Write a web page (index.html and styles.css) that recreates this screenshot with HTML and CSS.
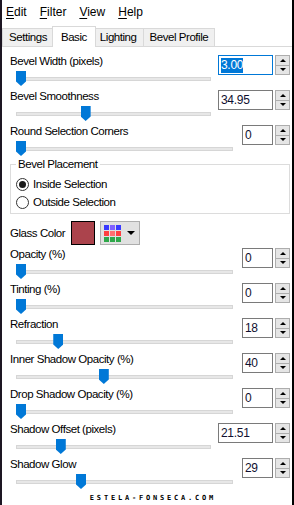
FILE: index.html
```html
<!DOCTYPE html>
<html>
<head>
    <meta charset="UTF-8">
    <title>Inner Bevel</title>
    <link rel="stylesheet" href="styles.css">
</head>
<body>
<div class="window">
    <div class="menubar">
        <span class="menu"><u>E</u>dit</span>
        <span class="menu"><u>F</u>ilter</span>
        <span class="menu"><u>V</u>iew</span>
        <span class="menu"><u>H</u>elp</span>
    </div>
    <div class="tabs">
        <div class="tab">Settings</div>
        <div class="tab active">Basic</div>
        <div class="tab">Lighting</div>
        <div class="tab">Bevel Profile</div>
    </div>
    <div class="panel">
        <div class="row wide">
            <div class="label">Bevel Width (pixels)</div>
            <div class="slider"><div class="track"></div><div class="thumb" style="--v:0"></div></div>
            <div class="spin focus"><div class="field"><span class="sel">3.00</span></div><div class="arrows"><div class="up"></div><div class="down"></div></div></div>
        </div>
        <div class="row wide">
            <div class="label">Bevel Smoothness</div>
            <div class="slider"><div class="track"></div><div class="thumb" style="--v:0.3495"></div></div>
            <div class="spin"><div class="field">34.95</div><div class="arrows"><div class="up"></div><div class="down"></div></div></div>
        </div>
        <div class="row">
            <div class="label">Round Selection Corners</div>
            <div class="slider"><div class="track"></div><div class="thumb" style="--v:0"></div></div>
            <div class="spin"><div class="field">0</div><div class="arrows"><div class="up"></div><div class="down"></div></div></div>
        </div>

        <fieldset class="group">
            <legend>Bevel Placement</legend>
            <label class="radio"><span class="dot checked"></span>Inside Selection</label>
            <label class="radio"><span class="dot"></span>Outside Selection</label>
        </fieldset>

        <div class="colorrow">
            <span class="label">Glass Color</span>
            <span class="swatch"></span>
            <span class="pick">
                <span class="grid">
                    <i class="b1"></i><i class="b2"></i><i class="b1"></i>
                    <i class="r1"></i><i class="r2"></i><i class="r1"></i>
                    <i class="g1"></i><i class="g1"></i><i class="g1"></i>
                </span>
                <span class="caret"></span>
            </span>
        </div>

        <div class="row">
            <div class="label">Opacity (%)</div>
            <div class="slider"><div class="track"></div><div class="thumb" style="--v:0"></div></div>
            <div class="spin"><div class="field">0</div><div class="arrows"><div class="up"></div><div class="down"></div></div></div>
        </div>
        <div class="row">
            <div class="label">Tinting (%)</div>
            <div class="slider"><div class="track"></div><div class="thumb" style="--v:0"></div></div>
            <div class="spin"><div class="field">0</div><div class="arrows"><div class="up"></div><div class="down"></div></div></div>
        </div>
        <div class="row">
            <div class="label">Refraction</div>
            <div class="slider"><div class="track"></div><div class="thumb" style="--v:0.18"></div></div>
            <div class="spin"><div class="field">18</div><div class="arrows"><div class="up"></div><div class="down"></div></div></div>
        </div>
        <div class="row">
            <div class="label">Inner Shadow Opacity (%)</div>
            <div class="slider"><div class="track"></div><div class="thumb" style="--v:0.40"></div></div>
            <div class="spin"><div class="field">40</div><div class="arrows"><div class="up"></div><div class="down"></div></div></div>
        </div>
        <div class="row">
            <div class="label">Drop Shadow Opacity (%)</div>
            <div class="slider"><div class="track"></div><div class="thumb" style="--v:0"></div></div>
            <div class="spin"><div class="field">0</div><div class="arrows"><div class="up"></div><div class="down"></div></div></div>
        </div>
        <div class="row wide">
            <div class="label">Shadow Offset (pixels)</div>
            <div class="slider"><div class="track"></div><div class="thumb" style="--v:0.2151"></div></div>
            <div class="spin"><div class="field">21.51</div><div class="arrows"><div class="up"></div><div class="down"></div></div></div>
        </div>
        <div class="row">
            <div class="label">Shadow Glow</div>
            <div class="slider"><div class="track"></div><div class="thumb" style="--v:0.29"></div></div>
            <div class="spin"><div class="field">29</div><div class="arrows"><div class="up"></div><div class="down"></div></div></div>
        </div>

        <div class="mark">estela-fonseca.com</div>
    </div>
</div>
</body>
</html>
```

FILE: styles.css
```css
body{margin: 0; background: #fff;}
.window{width: 294px; height: 505px; box-sizing: border-box; border-left: 2px solid #1d1623;
    border-right: 2px solid #000; background: #fff; overflow: hidden;
    font: 11.5px "Liberation Sans", Arial, sans-serif; letter-spacing: -0.45px; color: #000;}

.menubar{height: 24px; display: flex; align-items: center; gap: 13px; padding-left: 4px;
    font-size: 12px; letter-spacing: 0;}
.menu u{text-decoration-thickness: 1px; text-underline-offset: 2px;}

.tabs{height: 22px; display: flex; align-items: flex-end; border-bottom: 1px solid #d9d9d9;}
.tab{height: 18px; line-height: 17px; box-sizing: border-box; padding: 0 6px;
    background: #f0f0f0; border: 1px solid #d9d9d9; border-bottom: 0; margin-left: -1px;}
.tab:first-child{margin-left: 0;}
.tab.active{height: 21px; line-height: 21px; background: #fff; margin: 0 -2px -1px -2px;
    padding: 0 8px; position: relative; z-index: 1;}

.panel{padding: 6px 2px 0 8px;}

.row{display: grid; grid-template-columns: 1fr 48px; column-gap: 9px; height: 35px;}
.row.wide{grid-template-columns: 1fr 72px; column-gap: 7px;}
.row .label{line-height: 16px; white-space: nowrap;}
.slider{grid-row: 2; position: relative; height: 15px; margin-left: 6px;}
.track{margin-top: 6px; height: 2px; background: #e7e7e7; border: 1px solid #d6d6d6;}
.thumb{position: absolute; top: 0; left: calc(var(--v) * (100% - 10px)); width: 10px; height: 15px;
    background: #0078d7; clip-path: polygon(0 0, 100% 0, 100% 70%, 50% 100%, 0 70%);}

.spin{grid-column: 2; grid-row: 1 / 3; align-self: start; margin-top: 2px; display: flex;
    gap: 2px; height: 20px;}
.field{flex: 1; box-sizing: border-box; border: 1px solid #7a7a7a; padding: 0 2px;
    line-height: 18px; font-size: 12px; letter-spacing: -0.3px; color: #101030;}
.spin.focus .field{border-color: #0078d7;}
.sel{background: #0078d7; color: #fff; display: inline-block; line-height: 15px;}
.arrows{width: 15px; display: flex; flex-direction: column;}
.arrows div{flex: 1; background: #e5e5e5; border: 1px solid #adadad; display: flex;
    align-items: center; justify-content: center;}
.arrows .down{border-top: 0;}
.arrows .up::after{content: ""; border: 3px solid transparent; border-top: 0;
    border-bottom: 3px solid #000;}
.arrows .down::after{content: ""; border: 3px solid transparent; border-bottom: 0;
    border-top: 3px solid #000;}

.group{margin: 0; padding: 4px 0 5px 5px; border: 1px solid #dcdcdc; height: 56px;
    box-sizing: border-box;}
.group legend{padding: 0 2px; line-height: 13px;}
.radio{display: flex; align-items: center; gap: 4px; height: 18px;}
.dot{width: 13px; height: 13px; box-sizing: border-box; border: 1px solid #333; border-radius: 50%;
    display: flex; align-items: center; justify-content: center;}
.dot.checked::after{content: ""; width: 7px; height: 7px; border-radius: 50%; background: #1a1a1a;}

.colorrow{display: flex; align-items: center; height: 24px; margin: 7px 0 1px;}
.swatch{width: 24px; height: 24px; box-sizing: border-box; border: 1px solid #000;
    background: #ab434c; margin-left: 6px;}
.pick{width: 40px; height: 24px; box-sizing: border-box; margin-left: 5px; background: #e1e1e1;
    border: 1px solid #adadad; display: flex; align-items: center; padding-left: 3px; gap: 6px;}
.grid{display: grid; grid-template-columns: repeat(3, 5px); gap: 1px;}
.grid i{width: 5px; height: 5px;}
.b1{background: #3a3aff;} .b2{background: #8060ff;}
.r1{background: #ff4040;} .r2{background: #ff7070;}
.g1{background: #2ea84a;}
.caret{border: 4px solid transparent; border-bottom: 0; border-top: 4px solid #000;}

.mark{text-align: center; margin: 3px 0 0 6px; font: bold 7px "DejaVu Sans Mono", monospace;
    letter-spacing: 2.8px; text-transform: uppercase;}
```
